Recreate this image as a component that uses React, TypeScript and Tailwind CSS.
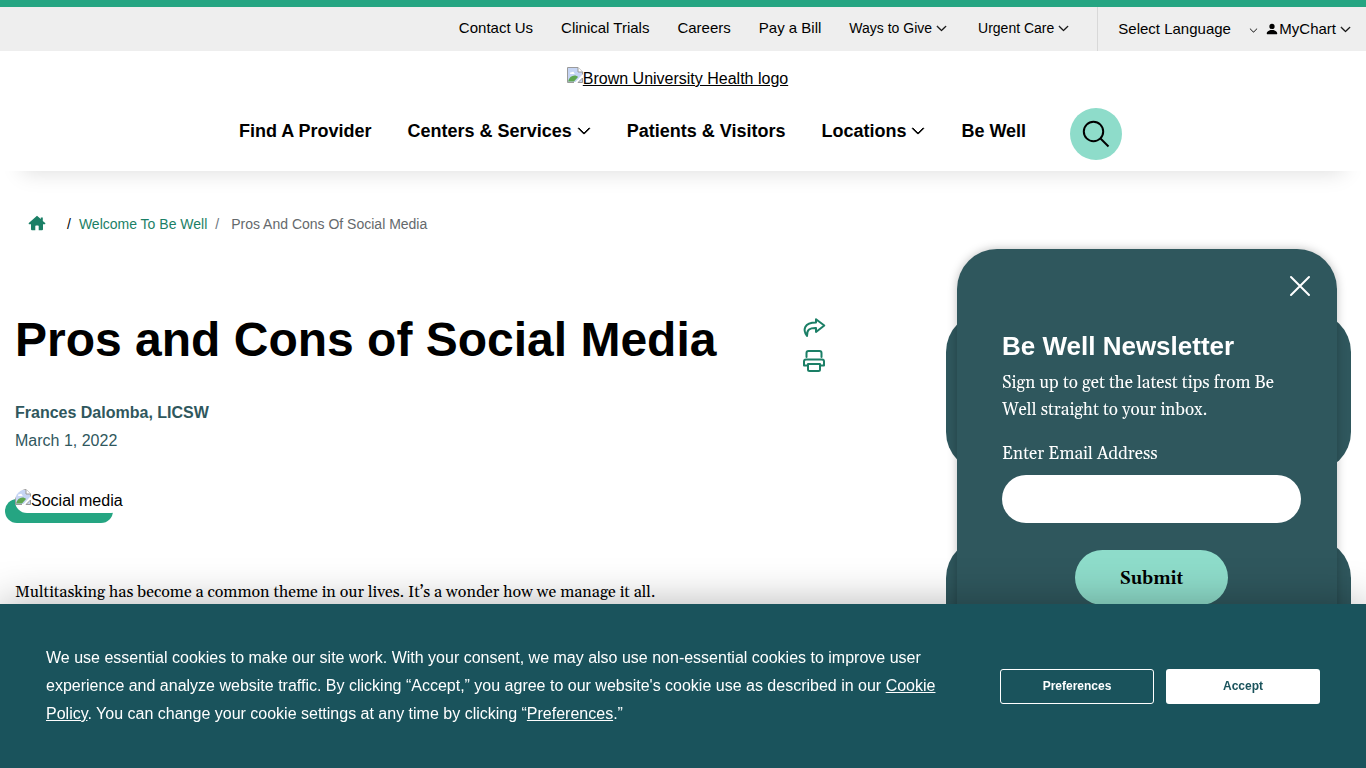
import type { ReactNode } from 'react';
import { BsChevronDown, BsPersonFill } from 'react-icons/bs';

const utilityLinks = ['Contact Us', 'Clinical Trials', 'Careers', 'Pay a Bill'];

const mainLinks = [
  { label: 'Find A Provider', menu: false },
  { label: 'Centers & Services', menu: true },
  { label: 'Patients & Visitors', menu: false },
  { label: 'Locations', menu: true },
  { label: 'Be Well', menu: false },
];

function MissingImage({ children }: { children: ReactNode }) {
  return (
    <span className="inline-flex items-start" role="img">
      <svg className="w-4 h-4 shrink-0" viewBox="0 0 16 16" fill="none" aria-hidden="true">
        <path d="M1 1h10l4 4v3L8.5 15H1z" fill="#c6d5f4" />
        <path d="M1 14.5c1-4 3.5-6 6.500-6 1.500 0 2.500.5 3.500 1.500L7 14.500z" fill="#5fa650" />
        <path d="M3 6.500c0-1 1-1.500 1.800-1.200C5.200 4.300 7 4.500 7 6c.8 0 1 1 .3 1H3.500z" fill="#fff" />
        <path d="M.5 15.500V.5h10.500l4.500 4.500v2.500M.5 15.500H7" stroke="#9a9a9a" />
        <path d="M11 .5V5h4.500" stroke="#9a9a9a" fill="#fff" />
        <path d="M15.500 11v4.500H11z" fill="#c6d5f4" stroke="#9a9a9a" />
      </svg>
      {children}
    </span>
  );
}

function TopBar() {
  return (
    <div className="border-t-[7px] border-[#25a582] bg-[#eeeeee]">
      <div className="flex h-11 items-center justify-end pr-[15px]">
        <nav aria-label="Utility" className="flex items-center gap-7 pr-7 pb-0.5 text-[15px] leading-5">
          {utilityLinks.map((label) => (
            <a key={label} href="#">{label}</a>
          ))}
          <button className="flex items-center gap-1 text-sm">
            Ways to Give <BsChevronDown className="w-[11px] h-[11px]" strokeWidth={1} />
          </button>
          <button className="flex items-center gap-1 pl-[3px] text-sm">
            Urgent Care <BsChevronDown className="w-[11px] h-[11px]" strokeWidth={1} />
          </button>
        </nav>
        <div className="flex h-full items-center border-l border-[#d8d8d8] pl-5 text-[15px]">
          <span className="grid items-center">
            <select
              aria-label="Select Language"
              className="col-start-1 row-start-1 w-[140px] appearance-none bg-transparent leading-5 outline-none"
            >
              <option>Select Language</option>
            </select>
            <BsChevronDown className="col-start-1 row-start-1 mt-0.5 w-[9px] h-[9px] justify-self-end pointer-events-none" />
          </span>
          <button className="ml-[7px] flex items-center leading-5">
            <BsPersonFill className="w-3.5 h-3.5" />
            MyChart <BsChevronDown className="ml-1 w-[11px] h-[11px]" strokeWidth={1} />
          </button>
        </div>
      </div>
    </div>
  );
}

function Header() {
  return (
    <header className="shadow-[0_24px_20px_-22px_rgba(0,0,0,0.13)]">
      <TopBar />
      <div className="flex flex-col items-center pt-[15px] pb-[11px]">
        <a href="#" className="mr-[11px]">
          <MissingImage>
            <span className="underline">Brown University Health logo</span>
          </MissingImage>
        </a>
        <nav aria-label="Main" className="mt-[17px] mr-[5px] flex items-center gap-9 text-lg font-bold leading-7">
          {mainLinks.map((link) =>
            link.menu ? (
              <button key={link.label} className="mb-1.5 flex items-center gap-[5px]">
                {link.label} <BsChevronDown className="w-3.5 h-3.5" strokeWidth={1} />
              </button>
            ) : (
              <a key={link.label} href="#" className="mb-1.5">{link.label}</a>
            )
          )}
          <button
            aria-label="Search"
            className="ml-2 flex w-[52px] h-[52px] items-center justify-center rounded-full bg-[#8edcca]"
          >
            <svg className="w-7 h-7" viewBox="0 0 28 28" fill="none" stroke="currentColor" strokeWidth="2">
              <circle cx="11.500" cy="11.500" r="9.700" />
              <path d="M18.500 18.500l8 8" />
            </svg>
          </button>
        </nav>
      </div>
    </header>
  );
}

function Breadcrumb() {
  return (
    <nav aria-label="Breadcrumb" className="flex items-center pt-[43px] pl-7 text-sm leading-5">
      <a href="#" aria-label="Home" className="mr-[21px] text-[#1b7f66]">
        <svg className="w-[18px] h-[18px]" viewBox="0 0 18 18" fill="currentColor">
          <path d="M9 .8L.8 8Q.3 9.200 1.200 9.200H3V14.300q0 1 1 1h3.300V11.300q0-.7.7-.7h2q.7 0 .7.7v4H14q1 0 1-1V9.200h1.800q.9 0 .4-1.200L14.800 5.900V2.500h-2v1.600z" />
        </svg>
      </a>
      <span>/</span>
      <a href="#" className="ml-2 text-[#1b7f66]">Welcome To Be Well</a>
      <span className="ml-2 mr-3 text-[#6c757d]">/</span>
      <span className="text-[#65696c]">Pros And Cons Of Social Media</span>
    </nav>
  );
}

function Article() {
  return (
    <article className="flex-1">
      <div className="flex items-start justify-between">
        <h1 className="text-5xl leading-[56px] font-bold">Pros and Cons of Social Media</h1>
        <div className="flex flex-col gap-[9px] pt-1 text-[#1b7f66]">
          <button aria-label="Share">
            <svg className="w-6 h-6" viewBox="0 0 24 24" fill="none" stroke="currentColor" strokeWidth="2" strokeLinejoin="round" strokeLinecap="round">
              <path d="M5 20C.5 14 2 6.500 14 6.500V3.200L22.300 9.500 14 16v-4C8 11.800 4.500 13.500 5 20z" />
            </svg>
          </button>
          <button aria-label="Print">
            <svg className="w-6 h-6" viewBox="0 0 24 24" fill="none" stroke="currentColor" strokeWidth="2" strokeLinejoin="round" strokeLinecap="round">
              <path d="M4.500 8V4Q4.500 2 6.500 2h11Q19.500 2 19.500 4V8" />
              <path d="M5.500 16.500H2V12.500Q2 10.500 4 10.500h16Q22 10.500 22 12.500v4h-3.500" />
              <path d="M6 15h12v5.500Q18 22 16.500 22h-9Q6 22 6 20.500z" />
            </svg>
          </button>
        </div>
      </div>
      <div className="mt-[26px] leading-7 text-[#2f575d]">
        <p className="font-bold">Frances Dalomba, LICSW</p>
        <p>March 1, 2022</p>
      </div>
      <figure className="mt-[34px] flex w-[108px] rounded-xl leading-6 shadow-[-10px_10px_0_#25a582] [&_svg]:rounded-tl-xl">
        <MissingImage>
          <span className="whitespace-nowrap">Social media</span>
        </MissingImage>
      </figure>
      <p className="mt-[65px] font-[Georgia,Gelasio,'Liberation_Serif',serif] leading-7">
        Multitasking has become a common theme in our lives. It’s a wonder how we manage it all.
      </p>
    </article>
  );
}

function Newsletter() {
  return (
    <aside className="fixed right-[29px] bottom-0 z-10 w-[380px] rounded-t-[40px] bg-[#2f575d] px-[45px] pt-[26px] pb-[163px] text-white shadow-[0_0_10px_rgba(0,0,0,0.25)]">
      <div className="-mr-[19px] flex justify-end">
        <button aria-label="Close">
          <svg className="w-[22px] h-[22px]" viewBox="0 0 22 22" stroke="currentColor" strokeWidth="2" strokeLinecap="round">
            <path d="M2 2l18 18M20 2L2 20" />
          </svg>
        </button>
      </div>
      <form className="-mr-[9px] flex flex-col font-[Georgia,Gelasio,'Liberation_Serif',serif] text-[17px] leading-[27px]">
        <h2 className="mt-[33px] font-['Liberation_Sans',Arial,sans-serif] text-[26px] leading-8 font-bold">
          Be Well Newsletter
        </h2>
        <p className="mt-2 pr-4">Sign up to get the latest tips from Be Well straight to your inbox.</p>
        <label htmlFor="email" className="mt-[17px]">Enter Email Address</label>
        <input id="email" type="email" className="mt-[7px] h-12 rounded-full bg-white px-5 text-black" />
        <button
          type="submit"
          className="mt-[27px] h-[55px] w-[153px] self-center rounded-full bg-[#8edcca] pt-1 font-bold text-black"
        >
          Submit
        </button>
      </form>
    </aside>
  );
}

function CookieBanner() {
  return (
    <section
      aria-label="Cookie consent"
      className="fixed inset-x-0 bottom-0 z-20 flex h-[164px] items-center justify-between bg-[#1a535c] px-[46px] text-white shadow-[0_0_40px_rgba(0,0,0,0.3)]"
    >
      <p className="max-w-[900px] leading-7">
        We use essential cookies to make our site work. With your consent, we may also use non-essential cookies to
        improve user experience and analyze website traffic. By clicking “Accept,” you agree to our website's cookie use
        as described in our <a href="#" className="underline">Cookie Policy</a>. You can change your cookie settings at
        any time by clicking “<a href="#" className="underline">Preferences</a>.”
      </p>
      <div className="flex gap-3 text-xs font-bold">
        <button className="h-[35px] w-[154px] rounded-[3px] border border-white">Preferences</button>
        <button className="h-[35px] w-[154px] rounded-[3px] bg-white text-[#1a535c]">Accept</button>
      </div>
    </section>
  );
}

export default function App() {
  return (
    <div className="min-h-screen bg-white font-['Liberation_Sans',Arial,sans-serif] text-base text-black">
      <Header />
      <Breadcrumb />
      <main className="flex gap-[120px] px-[15px] pt-[78px]">
        <Article />
        <aside className="flex w-[405px] shrink-0 flex-col gap-[66px]">
          <div className="h-40 rounded-[40px] bg-[#2f575d]" />
          <div className="h-40 rounded-[40px] bg-[#2f575d]" />
        </aside>
      </main>
      <Newsletter />
      <CookieBanner />
    </div>
  );
}
